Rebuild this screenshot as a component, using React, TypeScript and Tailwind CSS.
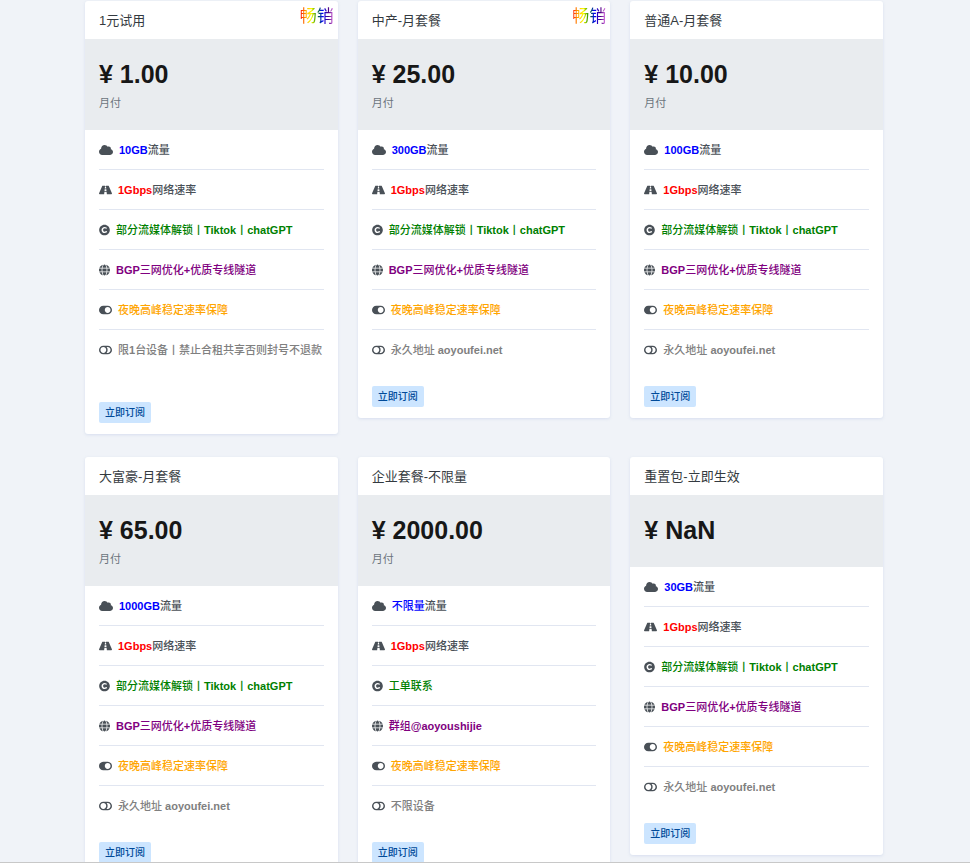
import type { ReactNode } from "react";
import type { IconType } from "react-icons";
import { FaCloud, FaRoad, FaCopyright, FaGlobe, FaToggleOn, FaToggleOff } from "react-icons/fa";

type Plan = {
  name: string;
  price: string;
  period?: string;
  hot?: boolean;
  traffic: string;
  unlock: string;
  route: string;
  note: string;
  extraLine?: boolean;
};

const UNLOCK = "部分流媒体解锁丨Tiktok丨chatGPT";
const ROUTE = "BGP三网优化+优质专线隧道";
const SITE = "永久地址 aoyoufei.net";

const plans: Plan[] = [
  { name: "1元试用", price: "1.00", period: "月付", hot: true, traffic: "10GB", unlock: UNLOCK, route: ROUTE, note: "限1台设备丨禁止合租共享否则封号不退款", extraLine: true },
  { name: "中产-月套餐", price: "25.00", period: "月付", hot: true, traffic: "300GB", unlock: UNLOCK, route: ROUTE, note: SITE },
  { name: "普通A-月套餐", price: "10.00", period: "月付", traffic: "100GB", unlock: UNLOCK, route: ROUTE, note: SITE },
  { name: "大富豪-月套餐", price: "65.00", period: "月付", traffic: "1000GB", unlock: UNLOCK, route: ROUTE, note: SITE },
  { name: "企业套餐-不限量", price: "2000.00", period: "月付", traffic: "不限量", unlock: "工单联系", route: "群组@aoyoushijie", note: "不限设备" },
  { name: "重置包-立即生效", price: "NaN", traffic: "30GB", unlock: UNLOCK, route: ROUTE, note: SITE },
];

/** Sets Latin runs in bold and leaves Chinese runs at medium weight. */
function Mixed({ text }: { text: string }) {
  return (
    <>
      {text.split(/([\x21-\x7e]+)/).map((run, i) =>
        i % 2 === 1 ? (
          <b key={i} className="font-bold">
            {run}
          </b>
        ) : (
          run
        ),
      )}
    </>
  );
}

function Feature({ icon: Icon, width, children }: { icon: IconType; width: string; children: ReactNode }) {
  return (
    <li className="flex h-10 items-center gap-1.5 border-b border-[#e1e6f1] whitespace-nowrap last:border-b-0">
      <Icon className={`h-3 shrink-0 ${width}`} aria-hidden="true" />
      <span>{children}</span>
    </li>
  );
}

function PlanCard({ plan }: { plan: Plan }) {
  return (
    <article className="relative rounded-[3px] bg-white shadow-[0_1px_3px_rgba(210,218,236,0.8)]">
      <h3 className="h-[38px] px-3.5 pt-2.5 text-[13px] leading-5 text-[#343a40]">{plan.name}</h3>
      {plan.hot && (
        <span className="absolute top-1 right-1 bg-[linear-gradient(to_right,red,orange,yellow,green,blue,indigo,violet)] bg-clip-text text-[17px] leading-6 text-transparent">
          畅销
        </span>
      )}
      <div className="bg-[#e9ecef] px-3.5 pt-[18px] pb-5">
        <div className="text-[25px] leading-[34px] font-bold text-[#171717]">¥ {plan.price}</div>
        {plan.period && <div className="h-[19px] pt-1 text-[11px] leading-4 text-[#6c757d]">{plan.period}</div>}
      </div>
      <div className="px-3.5 pb-[11px]">
        <ul className="text-[11px] leading-4 font-medium text-[#495057]">
          <Feature icon={FaCloud} width="w-3.5">
            <span className="text-[#0000ff]">
              <Mixed text={plan.traffic} />
            </span>
            流量
          </Feature>
          <Feature icon={FaRoad} width="w-[13px]">
            <span className="text-[#ff0000]">
              <Mixed text="1Gbps" />
            </span>
            网络速率
          </Feature>
          <Feature icon={FaCopyright} width="w-[11px]">
            <span className="text-[#008000]">
              <Mixed text={plan.unlock} />
            </span>
          </Feature>
          <Feature icon={FaGlobe} width="w-[11px]">
            <span className="text-[#800080]">
              <Mixed text={plan.route} />
            </span>
          </Feature>
          <Feature icon={FaToggleOn} width="w-[13px]">
            <span className="text-[#ffa500]">夜晚高峰稳定速率保障</span>
          </Feature>
          <Feature icon={FaToggleOff} width="w-[13px]">
            <span className="text-[#808080]">
              <Mixed text={plan.note} />
            </span>
          </Feature>
        </ul>
        {plan.extraLine && <div className="h-4" />}
        <button type="button" className="mt-4 block h-[21px] rounded-[2px] bg-[#cce5ff] px-1.5 text-[10px] leading-5 font-medium text-[#004a99]">
          立即订阅
        </button>
      </div>
    </article>
  );
}

export default function App() {
  return (
    <main className="h-screen overflow-hidden border-b border-[#c8c8c8] bg-[#f0f3f8] pt-px pr-[87px] pl-[85px] font-['Liberation_Sans','Noto_Sans_CJK_SC',sans-serif]">
      <div className="grid grid-cols-3 items-start gap-x-5 gap-y-[23px]">
        {plans.map((plan) => (
          <PlanCard key={plan.name} plan={plan} />
        ))}
      </div>
    </main>
  );
}
